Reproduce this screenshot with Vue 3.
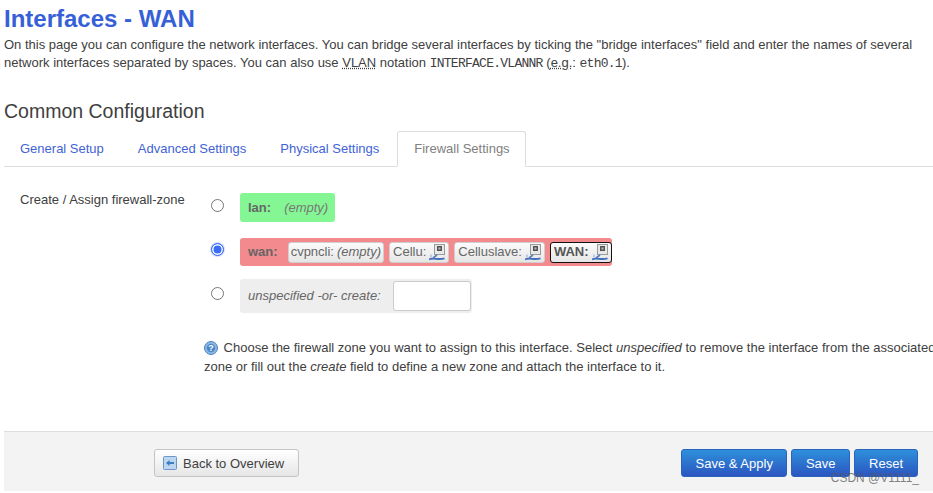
<script setup>
const tabs = [
  { label: 'General Setup' },
  { label: 'Advanced Settings' },
  { label: 'Physical Settings' },
  { label: 'Firewall Settings', active: true }
]
const wanNets = [
  { label: 'Cellu:' },
  { label: 'Celluslave:' },
  { label: 'WAN:', current: true }
]
</script>

<template>
  <div class="page">
    <h2 class="title">Interfaces - WAN</h2>
    <p class="intro">On this page you can configure the network interfaces. You can bridge several interfaces by ticking the "bridge interfaces" field and enter the names of several network interfaces separated by spaces. You can also use <abbr>VLAN</abbr> notation <code>INTERFACE.VLANNR</code> (<abbr>e.g.</abbr>: <code>eth0.1</code>).</p>
    <h3 class="section">Common Configuration</h3>
    <ul class="tabs">
      <li v-for="t in tabs" :key="t.label" class="tab" :class="{ active: t.active }">{{ t.label }}</li>
    </ul>

    <div class="field">
      <div class="field-label">Create / Assign firewall-zone</div>
      <div class="field-body">
        <div class="zones">
          <div class="zone-row">
            <span class="radio"></span>
            <div class="zone lan"><b class="zname">lan:</b><em class="empty">(empty)</em></div>
          </div>
          <div class="zone-row">
            <span class="radio checked"></span>
            <div class="zone wan">
              <b class="zname">wan:</b>
              <span class="net first"><span>cvpncli:</span><em>(empty)</em></span>
              <span v-for="n in wanNets" :key="n.label" class="net" :class="{ current: n.current }">
                <span>{{ n.label }}</span>
                <svg class="neticon" width="16" height="17" viewBox="0 0 16 17">
                  <rect x="5.5" y="0.5" width="10" height="10" fill="#e8e8e8" stroke="#9a9a9a"/>
                  <rect x="8" y="2" width="5" height="5" fill="#555"/>
                  <rect x="9.5" y="3.5" width="2" height="2" fill="#bbb"/>
                  <path d="M8 11l-4 3" stroke="#5d80bd" stroke-width="1.6" fill="none"/>
                  <path d="M2 10.5v3" stroke="#9fb5d8" stroke-width="1.2" fill="none"/>
                  <path d="M0 15.5c4-2.5 9 1 15.5-1.2" stroke="#3f6fbd" stroke-width="1.8" fill="none"/>
                </svg>
              </span>
            </div>
          </div>
          <div class="zone-row">
            <span class="radio"></span>
            <div class="zone none"><em class="unspec">unspecified -or- create:</em><input class="create" type="text" /></div>
          </div>
        </div>
        <div class="help">
          <svg class="helpicon" width="14" height="14" viewBox="0 0 14 14">
            <circle cx="7" cy="7" r="6.5" fill="#8db9e4" stroke="#4d83bd"/>
            <circle cx="7" cy="7" r="4.2" fill="#4a86c8"/>
            <text x="7" y="10" text-anchor="middle" font-size="9" font-weight="700" font-family="Liberation Sans" fill="#fff">?</text>
          </svg>
          Choose the firewall zone you want to assign to this interface. Select <em>unspecified</em> to remove the interface from the associated zone or fill out the <em>create</em> field to define a new zone and attach the interface to it.
        </div>
      </div>
    </div>

    <div class="actions">
      <button class="btn back">
        <svg width="14" height="14" viewBox="0 0 14 14">
          <rect x="0.5" y="0.5" width="13" height="13" rx="1" fill="#bcd6f0" stroke="#6b97c8"/>
          <path d="M3 7l3.5-3v2h4.5v2H6.5v2z" fill="#3f7cc0"/>
        </svg>
        Back to Overview
      </button>
      <div class="right">
        <button class="btn primary tight">Save &amp; Apply</button>
        <button class="btn primary tight">Save</button>
        <button class="btn primary">Reset</button>
      </div>
    </div>
    <div class="watermark">CSDN @V1111_</div>
  </div>
</template>

<style>
html, body { margin: 0; background: #fff; overflow: hidden; }
</style>

<style scoped>
.page {
  position: relative;
  width: 933px;
  height: 493px;
  box-sizing: border-box;
  padding-left: 4px;
  overflow: hidden;
  font-family: "Liberation Sans", Arial, sans-serif;
  font-size: 13px;
  line-height: 18px;
  color: #404040;
  background: #fff;
}
.title {
  margin: 0;
  padding-top: 5px;
  font-size: 24px;
  line-height: 28px;
  font-weight: 700;
  color: #3560d8;
}
.intro {
  margin: 3px 0 0;
  width: 925px;
}
abbr { text-decoration: underline dotted; }
code { font-family: "Liberation Mono", monospace; font-size: 13px; line-height: 1; letter-spacing: -0.74px; }
.section {
  margin: 0;
  padding-top: 26px;
  font-size: 19.5px;
  line-height: 26px;
  font-weight: 400;
  color: #404040;
}
.tabs {
  list-style: none;
  display: flex;
  margin: 7px 0 0;
  padding: 0;
  height: 35px;
  border-bottom: 1px solid #ddd;
}
.tab {
  padding: 9px 18px 0 16px;
  color: #3f63d6;
  box-sizing: border-box;
  height: 36px;
}
.tab.active {
  color: #808080;
  background: #fff;
  border: 1px solid #ddd;
  border-bottom-color: #fff;
  border-radius: 3px 3px 0 0;
  padding: 8px 15px 0 16px;
}
.field { display: flex; padding-top: 24px; }
.field-label { width: 200px; padding: 0 0 0 16px; box-sizing: border-box; flex: none; }
.field-body { flex: 1; min-width: 0; }
.zones { display: flex; flex-direction: column; white-space: nowrap; }
.zone-row { display: flex; align-items: flex-start; height: 44px; }
.radio {
  width: 13px;
  height: 13px;
  box-sizing: border-box;
  border: 1px solid #767676;
  border-radius: 50%;
  margin: 8px 16px 0 7px;
  background: #fff;
  flex: none;
}
.radio.checked {
  border: 1.5px solid #3b6cf5;
  box-shadow: inset 0 0 0 1.5px #fff, 0 0 0 1px #d5e0fb;
  background: #3b6cf5;
}
.zone {
  display: flex;
  align-items: center;
  border-radius: 3px;
  box-sizing: border-box;
  padding: 0 2px 0 8px;
  color: #666;
}
.zname { font-weight: 700; margin-right: 8px; }
.lan { background: #84f794; height: 29px; width: 95px; margin-top: 2px; }
.lan .zname { margin-right: 13px; }
.empty { color: #777; }
.wan { background: #f28a8e; height: 28px; width: 372px; gap: 5px; margin-top: 3px; }
.wan .zname { margin-right: 5px; }
.net {
  display: inline-flex;
  align-items: center;
  gap: 3px;
  height: 21px;
  padding: 0 3px;
  background: linear-gradient(#fbfbfb, #e6e6e6);
  border: 1px solid #cfcfcf;
  border-radius: 3px;
  box-sizing: border-box;
  color: #666;
}
.net.first { padding: 0 2px; }
.net.current { border: 1px solid #111; font-weight: 700; color: #555; }
.neticon { flex: none; }
.none { background: #eee; height: 34px; width: 232px; }
.unspec { margin-right: 12px; }
.create {
  width: 78px;
  height: 30px;
  box-sizing: border-box;
  border: 1px solid #ccc;
  border-radius: 3px;
  background: #fff;
  padding: 0;
}
.help {
  width: 736px;
  margin: 15px 0 0 0;
  line-height: 19px;
}
.helpicon { vertical-align: -3px; margin-right: 2px; }
.actions {
  position: absolute;
  left: 4px;
  right: 0;
  top: 431px;
  height: 60px;
  background: #f3f3f3;
  border-top: 1px solid #ddd;
  display: flex;
  align-items: flex-start;
  justify-content: space-between;
  padding: 17px 15px 0 150px;
  box-sizing: border-box;
}
.right { display: flex; gap: 4px; }
.btn {
  height: 28px;
  border-radius: 3px;
  font-family: inherit;
  font-size: 13px;
  cursor: pointer;
}
.back {
  width: 145px;
  color: #404040;
  background: linear-gradient(#fff, #e6e6e6);
  border: 1px solid #c4c4c4;
  display: flex;
  align-items: center;
  gap: 6px;
  padding: 0 0 0 8px;
}
.primary {
  color: #fff;
  background: linear-gradient(#2e90db, #2c55c0);
  border: 1px solid #2a63bc;
  padding: 0 14px;
}
.primary.tight { padding: 0 13.5px; }
.watermark {
  position: absolute;
  right: 14px;
  top: 469px;
  font-size: 12px;
  color: rgba(90, 90, 90, 0.75);
}
</style>
